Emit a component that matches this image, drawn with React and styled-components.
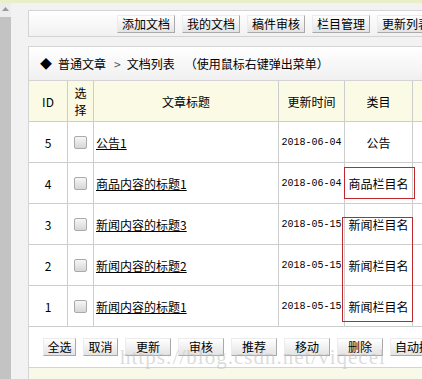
import styled, { createGlobalStyle } from "styled-components";

const GlobalStyle = createGlobalStyle`
  html, body {
    margin: 0;
    padding: 0;
    overflow: hidden;
    background: #f2f2f2;
    font-family: "Noto Sans CJK SC", "Liberation Sans", sans-serif;
    font-size: 12px;
    color: #000;
  }
`;

const Page = styled.div`
  width: 422px;
  height: 379px;
  overflow: hidden;
  display: flex;
  flex-direction: column;
`;

const TopLine = styled.div`
  height: 3px;
  flex-shrink: 0;
  background: #e9efc8;
`;

const Body = styled.div`
  flex: 1;
  display: flex;
`;

const ScrollBar = styled.div`
  width: 11px;
  flex-shrink: 0;
  display: flex;
  flex-direction: column;
`;

const ArrowButton = styled.div`
  height: 14px;
  background: #ececec;
  display: flex;
  justify-content: center;
  padding-top: 4px;
  box-sizing: border-box;
  svg {
    display: block;
  }
`;

const Track = styled.div`
  flex: 1;
  background: #c3c3c3;
`;

const Main = styled.div`
  position: relative;
  flex-shrink: 0;
  width: 540px;
  padding: 7px 0 0 17px;
`;

const ToolbarBox = styled.div`
  height: 27px;
  box-sizing: border-box;
  border: 1px solid #d4d4d4;
  background: linear-gradient(#ffffff, #f1f1f1);
  display: flex;
  align-items: center;
  gap: 7px;
  padding-left: 88px;
`;

const Button = styled.button`
  width: ${(p) => p.$w || 58}px;
  height: 18px;
  flex-shrink: 0;
  padding: 0;
  margin: 0;
  font-family: "Noto Sans CJK SC", sans-serif;
  font-size: 12px;
  line-height: 16px;
  color: #000;
  background: linear-gradient(#ffffff, #e3e3e3);
  border: 1px solid;
  border-color: #ececec #a9a9a9 #a9a9a9 #ececec;
  border-radius: 0;
`;

const ListBox = styled.div`
  margin-top: 9px;
  border-top: 1px solid #d4d4d4;
  border-left: 1px solid #d4d4d4;
`;

const ListHeader = styled.div`
  height: 33px;
  border-bottom: 1px solid #d4d4d4;
  background: linear-gradient(#ffffff, #f0f0f0);
  display: flex;
  align-items: center;
  padding-left: 11px;
  gap: 6px;
  font-size: 12px;
`;

const Crumb = styled.span`
  color: ${(p) => (p.$muted ? "#555" : "#000")};
  margin-left: ${(p) => p.$ml || 0}px;
`;

const Row = styled.div`
  display: grid;
  grid-template-columns: 39px 26px 185px 66px 68px 1fr;
  height: 41px;
  background: ${(p) => (p.$head ? "#fbfbe5" : "#ffffff")};
`;

const Cell = styled.div`
  border-right: 1px solid #cdcdcd;
  border-bottom: 1px solid #cdcdcd;
  display: flex;
  align-items: center;
  justify-content: ${(p) => (p.$left ? "flex-start" : "center")};
  padding: ${(p) => (p.$left ? "0 0 0 2px" : "0 3px")};
  text-align: center;
  line-height: 17px;
  overflow: hidden;
  white-space: ${(p) => (p.$wrap ? "normal" : "nowrap")};
`;

const DateText = styled.span`
  font-family: "Liberation Mono", monospace;
  font-size: 10px;
`;

const TitleLink = styled.a`
  color: #000;
  text-decoration: underline;
`;

const CheckBox = styled.span`
  width: 11px;
  height: 11px;
  border: 1px solid #aaaaaa;
  border-radius: 2px;
  background: linear-gradient(#f6f6f6, #d6d6d6);
  display: block;
`;

const ActionBar = styled.div`
  height: 41px;
  box-sizing: border-box;
  border-bottom: 1px solid #d4d4d4;
  background: #ffffff;
  display: flex;
  align-items: center;
  gap: 7px;
  padding-left: 14px;
`;

const Footer = styled.div`
  height: 30px;
  background: #f9f9ea;
`;

const Watermark = styled.div`
  position: absolute;
  left: 109px;
  top: 342px;
  font-family: "Liberation Serif", serif;
  font-size: 21px;
  letter-spacing: 1px;
  color: rgba(190, 190, 190, 0.55);
  pointer-events: none;
  white-space: nowrap;
`;

const RedBox = styled.div`
  position: absolute;
  left: ${(p) => p.$x}px;
  top: ${(p) => p.$y}px;
  width: ${(p) => p.$w}px;
  height: ${(p) => p.$h}px;
  box-sizing: border-box;
  border: 1px solid #c0272d;
  pointer-events: none;
`;

const toolbar = ["添加文档", "我的文档", "稿件审核", "栏目管理", "更新列表"];

const rows = [
  { id: 5, title: "公告1", date: "2018-06-04", cat: "公告" },
  { id: 4, title: "商品内容的标题1", date: "2018-06-04", cat: "商品栏目名" },
  { id: 3, title: "新闻内容的标题3", date: "2018-05-15", cat: "新闻栏目名" },
  { id: 2, title: "新闻内容的标题2", date: "2018-05-15", cat: "新闻栏目名" },
  { id: 1, title: "新闻内容的标题1", date: "2018-05-15", cat: "新闻栏目名" },
];

const actions = [
  ["全选", 33],
  ["取消", 35],
  ["更新", 46],
  ["审核", 46],
  ["推荐", 46],
  ["移动", 46],
  ["删除", 46],
  ["自动摘要", 58],
];

export default function App() {
  return (
    <Page>
      <GlobalStyle />
      <TopLine />
      <Body>
        <ScrollBar>
          <ArrowButton>
            <svg width="7" height="4" viewBox="0 0 7 4">
              <path d="M0 4 L3.5 0 L7 4 Z" fill="#9a9a9a" />
            </svg>
          </ArrowButton>
          <Track />
        </ScrollBar>
        <Main>
          <ToolbarBox>
            {toolbar.map((t) => (
              <Button key={t}>{t}</Button>
            ))}
          </ToolbarBox>
          <ListBox>
            <ListHeader>
              <Crumb>◆</Crumb>
              <Crumb>普通文章</Crumb>
              <Crumb $muted $ml={2}>&gt;</Crumb>
              <Crumb>文档列表</Crumb>
              <Crumb $ml={4}>（使用鼠标右键弹出菜单）</Crumb>
            </ListHeader>
            <Row $head>
              <Cell>ID</Cell>
              <Cell $wrap>选择</Cell>
              <Cell>文章标题</Cell>
              <Cell>更新时间</Cell>
              <Cell>类目</Cell>
              <Cell />
            </Row>
            {rows.map((r) => (
              <Row key={r.id}>
                <Cell>{r.id}</Cell>
                <Cell>
                  <CheckBox />
                </Cell>
                <Cell $left>
                  <TitleLink href="#">{r.title}</TitleLink>
                </Cell>
                <Cell>
                  <DateText>{r.date}</DateText>
                </Cell>
                <Cell>{r.cat}</Cell>
                <Cell />
              </Row>
            ))}
            <ActionBar>
              {actions.map(([t, w]) => (
                <Button key={t} $w={w}>
                  {t}
                </Button>
              ))}
            </ActionBar>
            <Footer />
          </ListBox>
          <Watermark>https://blog.csdn.net/viqecel</Watermark>
          <RedBox $x={333} $y={164} $w={71} $h={32} />
          <RedBox $x={331} $y={214} $w={71} $h={105} />
        </Main>
      </Body>
    </Page>
  );
}
